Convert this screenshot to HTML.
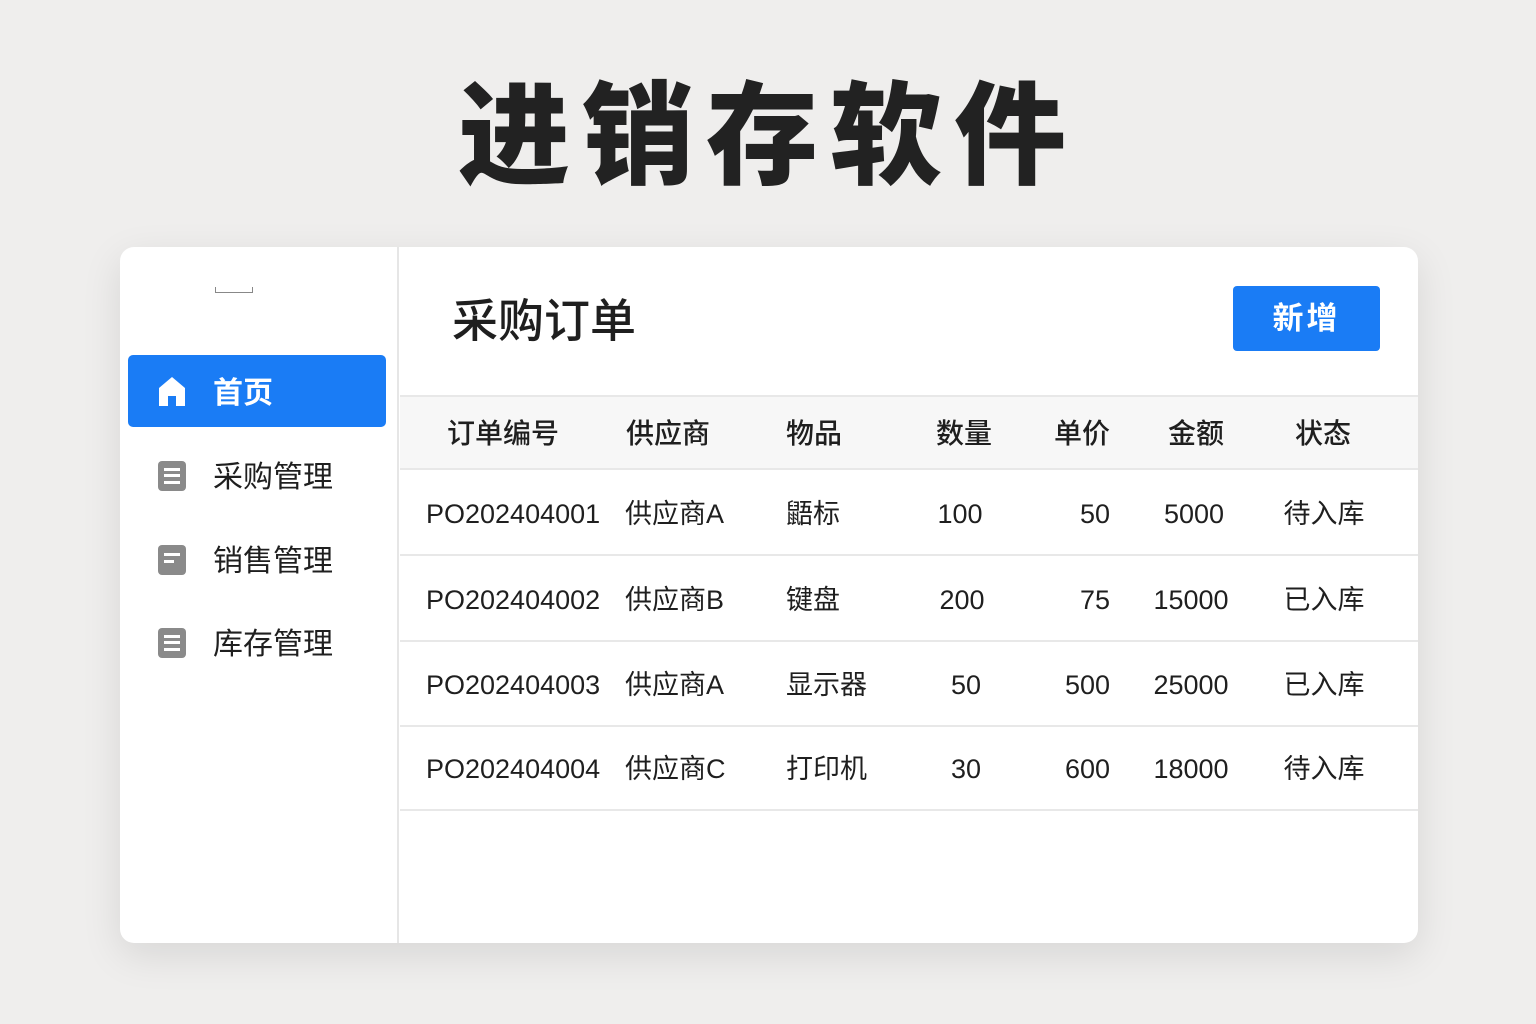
<!DOCTYPE html>
<html><head><meta charset="utf-8"><style>
*{margin:0;padding:0;box-sizing:border-box}
body{width:1536px;height:1024px;background:#efeeed;font-family:"Liberation Sans","Noto Sans CJK SC",sans-serif;position:relative;overflow:hidden;color:#1f1f1f}
.a{position:absolute;white-space:nowrap}
.title{left:0;width:1536px;top:62px;text-align:center;font-size:112px;font-weight:900;letter-spacing:12px;color:#222;line-height:150px}
.card{left:120px;top:247px;width:1298px;height:696px;background:#fff;border-radius:14px;box-shadow:0 12px 40px rgba(0,0,0,.10);overflow:hidden}
.side{left:0;top:0;width:279px;height:696px;border-right:2px solid #e6e6e6}
.nav{left:8px;width:258px;height:72px;font-size:30px;line-height:72px}
.nav span{position:absolute;left:85px;top:3px}
.ic{position:absolute;left:30px;top:22px;width:28px;height:30px;background:#8a8a8a;border-radius:4px}
.ic i{position:absolute;left:6px;width:16px;height:3px;background:#fff}
.c{text-align:center;width:200px;font-size:27px;line-height:40px;height:40px}
.h{text-align:center;width:200px;font-size:28px;font-weight:500;top:165px}
.line{left:280px;width:1018px;height:2px;background:#e8e8e8}
</style></head><body>
<div class="a title">进销存软件</div>
<div class="a card">
 <div class="a side">
  <div class="a" style="left:95px;top:40px;width:38px;height:6px;border:1px solid #888;border-top:none"></div>
  <div class="a nav" style="top:108px;background:#1a7cf5;border-radius:5px;color:#fff;font-weight:bold">
   <svg style="position:absolute;left:30px;top:21px" width="28" height="30" viewBox="0 0 28 30"><path d="M14 1 L27 12 V30 H18 V20 H10 V30 H1 V12 Z" fill="#fff"/></svg>
   <span>首页</span></div>
  <div class="a nav" style="top:192px"><div class="ic"><i style="top:7px"></i><i style="top:13px"></i><i style="top:20px"></i></div><span>采购管理</span></div>
  <div class="a nav" style="top:276px"><div class="ic"><i style="top:8px"></i><i style="top:15px;width:10px"></i></div><span>销售管理</span></div>
  <div class="a nav" style="top:359px"><div class="ic"><i style="top:7px"></i><i style="top:13px"></i><i style="top:20px"></i></div><span>库存管理</span></div>
 </div>
 <div class="a" style="left:332px;top:44px;font-size:46px;line-height:60px;font-weight:500">采购订单</div>
 <div class="a" style="left:1113px;top:39px;width:147px;height:65px;background:#1a7cf5;border-radius:4px;color:#fff;font-size:31px;font-weight:bold;line-height:65px;text-align:center;letter-spacing:3px">新增</div>
 <div class="a line" style="top:148px"></div>
 <div class="a" style="left:280px;top:150px;width:1018px;height:71px;background:#f7f7f7"></div>
 <div class="a line" style="top:221px"></div>
 <div class="a h" style="left:283px">订单编号</div>
 <div class="a h" style="left:448px">供应商</div>
 <div class="a h" style="left:594px">物品</div>
 <div class="a h" style="left:744px">数量</div>
 <div class="a h" style="left:862px">单价</div>
 <div class="a h" style="left:976px">金额</div>
 <div class="a h" style="left:1103px">状态</div>
 <div class="a line" style="top:307px"></div>
 <div class="a line" style="top:393px"></div>
 <div class="a line" style="top:478px"></div>
 <div class="a line" style="top:562px"></div>

 <div class="a c" style="left:306px;top:247px;text-align:left;width:auto">PO202404001</div>
 <div class="a c" style="left:505px;top:247px;text-align:left;width:auto">供应商A</div>
 <div class="a c" style="left:666px;top:247px;text-align:left;width:auto">鼯标</div>
 <div class="a c" style="left:740px;top:247px">100</div>
 <div class="a c" style="left:790px;top:247px;text-align:right">50</div>
 <div class="a c" style="left:974px;top:247px">5000</div>
 <div class="a c" style="left:1104px;top:247px">待入库</div>

 <div class="a c" style="left:306px;top:333px;text-align:left;width:auto">PO202404002</div>
 <div class="a c" style="left:505px;top:333px;text-align:left;width:auto">供应商B</div>
 <div class="a c" style="left:666px;top:333px;text-align:left;width:auto">键盘</div>
 <div class="a c" style="left:742px;top:333px">200</div>
 <div class="a c" style="left:790px;top:333px;text-align:right">75</div>
 <div class="a c" style="left:971px;top:333px">15000</div>
 <div class="a c" style="left:1104px;top:333px">已入库</div>

 <div class="a c" style="left:306px;top:418px;text-align:left;width:auto">PO202404003</div>
 <div class="a c" style="left:505px;top:418px;text-align:left;width:auto">供应商A</div>
 <div class="a c" style="left:666px;top:418px;text-align:left;width:auto">显示器</div>
 <div class="a c" style="left:746px;top:418px">50</div>
 <div class="a c" style="left:790px;top:418px;text-align:right">500</div>
 <div class="a c" style="left:971px;top:418px">25000</div>
 <div class="a c" style="left:1104px;top:418px">已入库</div>

 <div class="a c" style="left:306px;top:502px;text-align:left;width:auto">PO202404004</div>
 <div class="a c" style="left:505px;top:502px;text-align:left;width:auto">供应商C</div>
 <div class="a c" style="left:666px;top:502px;text-align:left;width:auto">打印机</div>
 <div class="a c" style="left:746px;top:502px">30</div>
 <div class="a c" style="left:790px;top:502px;text-align:right">600</div>
 <div class="a c" style="left:971px;top:502px">18000</div>
 <div class="a c" style="left:1104px;top:502px">待入库</div>
</div>
</body></html>
